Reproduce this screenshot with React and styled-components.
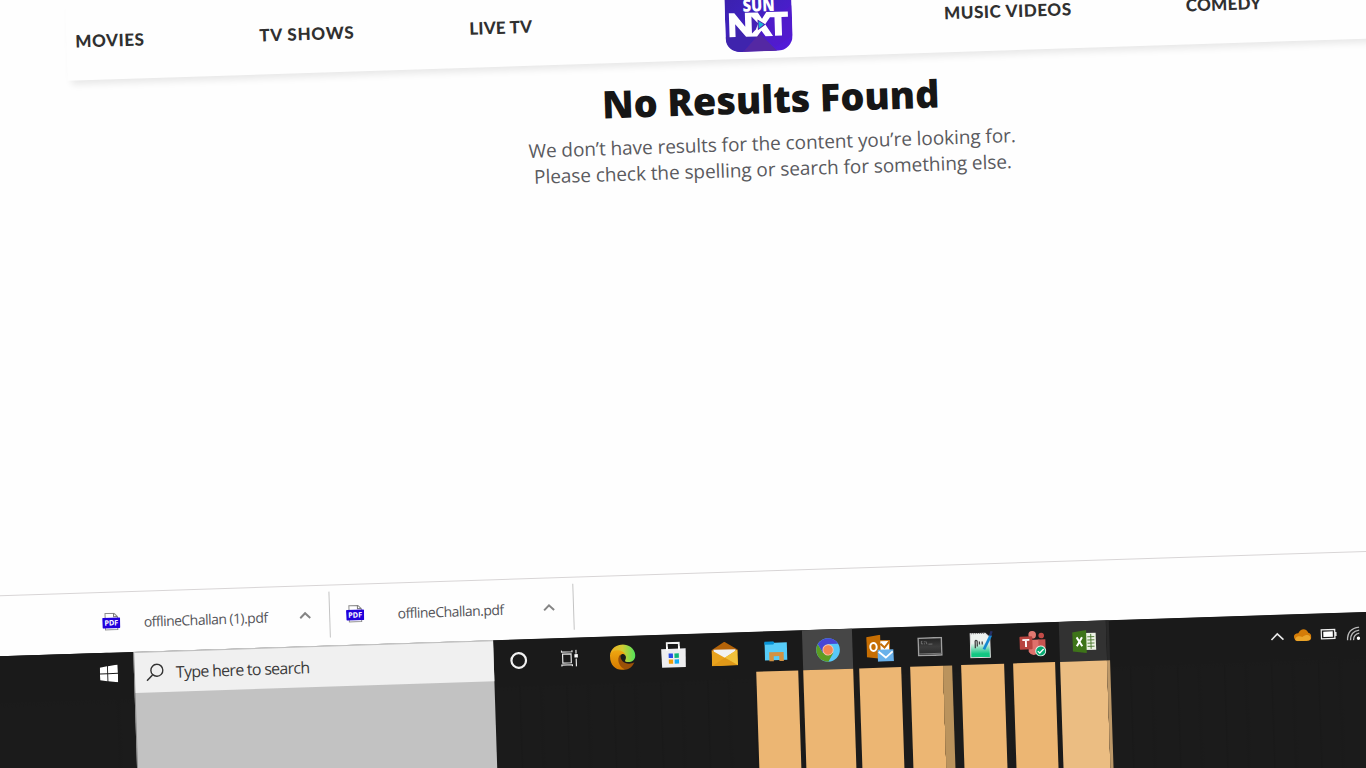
import React from "react";
import styled, { createGlobalStyle } from "styled-components";

const GlobalStyle = createGlobalStyle`
  * { box-sizing: border-box; }
  body { margin: 0; background: #fefefe; }
`;

const Viewport = styled.main`
  width: 1366px;
  height: 768px;
  overflow: hidden;
  background: #fefefe;
`;

const Desktop = styled.div`
  display: flex;
  flex-direction: column;
  width: 1430px;
  height: 830px;
  margin-left: -30px;
  transform-origin: 30px 0;
  transform: rotate(-1.862deg);
  font-family: "Open Sans", "Noto Sans", sans-serif;
`;

/* Site header */
const Header = styled.header`
  display: flex;
  height: 82.5px;
  flex: none;
  padding-left: 95px;
`;

const Nav = styled.nav`
  display: flex;
  flex: 1;
  padding: 9px 0 0 9px;
  background: #fefefe;
  box-shadow: 0 8px 7px -4px rgba(0, 0, 0, 0.09);
`;

const NavSlot = styled.div`
  flex: none;
  width: ${(p) => p.$width}px;
`;

const NavLink = styled.a`
  display: block;
  padding-top: 23px;
  font: 900 17px/24px Lato, "Open Sans", sans-serif;
  letter-spacing: ${(p) => p.$spacing || 0}px;
  color: #303030;
  white-space: nowrap;
`;

/* Empty result message */
const Results = styled.section`
  display: flex;
  flex-direction: column;
  align-items: center;
  flex: none;
  height: 512.5px;
  width: 1430px;
  padding: 12.2px 0 0 164px;
`;

const Title = styled.h1`
  margin: 0;
  font-size: 38px;
  line-height: 56px;
  font-weight: 800;
  letter-spacing: -0.12px;
  color: #161616;
  white-space: nowrap;
`;

const Message = styled.p`
  margin: 4.8px 0 0;
  font-size: 19px;
  line-height: 26px;
  letter-spacing: -0.07px;
  color: #5a5a5e;
  text-align: center;
  white-space: nowrap;
`;

/* Browser download shelf */
const Shelf = styled.div`
  display: flex;
  flex: none;
  height: 60.5px;
  padding: 6px 0 0 112px;
  border-top: 1px solid #d8d5d6;
  background: #fefefe;
`;

const Download = styled.div`
  display: flex;
  align-items: center;
  width: ${(p) => p.$width}px;
  height: 46px;
  padding-left: ${(p) => p.$inset || 0}px;
  border-right: 1px solid #c4c4c4;
`;

const FileName = styled.span`
  width: ${(p) => p.$width}px;
  margin-left: ${(p) => p.$gap}px;
  font-size: 14px;
  letter-spacing: -0.53px;
  color: #55555a;
  white-space: nowrap;
`;

/* Taskbar */
const Taskbar = styled.footer`
  display: flex;
  flex: 1;
  background:
    linear-gradient(#1a1a1a 0 44px, transparent 52px),
    linear-gradient(90deg, #1b1b1b 0 115px, transparent 118px),
    repeating-linear-gradient(90deg, #1b1b1b 0 9px, #191919 10px, #1b1b1b 12px 29px, #1a1a1a 31px, #1b1b1b 35px 47px);
`;

const Start = styled.div`
  display: flex;
  justify-content: center;
  width: 142px;
  padding: 12px 0 0 91px;
`;

const Search = styled.div`
  width: 360px;
  background: #c2c2c2;
  border-left: 1px solid #8a8a8a;
`;

const SearchField = styled.div`
  display: flex;
  align-items: center;
  gap: 12px;
  height: 41px;
  padding-left: 11px;
  border-top: 1px solid #bdbdbd;
  background: #f0f0f0;
  font-size: 16px;
  letter-spacing: -0.72px;
  color: #3b3b3b;
  white-space: nowrap;
`;

const AppSlot = styled.div`
  flex: none;
  width: 51.4px;
`;

const AppIcon = styled.div`
  display: flex;
  align-items: center;
  justify-content: center;
  width: ${(p) => (p.$active ? "50.2px" : "auto")};
  height: 40.3px;
  margin-left: ${(p) => (p.$active ? 0.8 : 0)}px;
  padding-left: ${(p) => Math.max(0, p.$shift || 0)}px;
  padding-right: ${(p) => Math.max(0, -(p.$shift || 0))}px;
  padding-top: 1.8px;
  background: ${(p) => p.$active || "transparent"};
`;

const Strip = styled.div`
  width: ${(p) => (p.$wide ? 50.2 : 42.2)}px;
  height: 140px;
  margin-left: ${(p) => (p.$wide ? 0.8 : 4.8)}px;
  background: ${(p) => p.$fill || "#ecb673"};
`;

const Tray = styled.div`
  display: flex;
  align-items: center;
  gap: 9px;
  height: 43px;
  margin-left: 160px;
`;

const Svg = ({ w, h, children }) => (
  <svg width={w} height={h} viewBox={`0 0 ${w} ${h}`} fill="none">
    {children}
  </svg>
);

const LogoArt = styled.svg`
  display: block;
  text { font-family: "Open Sans", sans-serif; font-weight: 800; fill: #fff; }
`;

const Logo = () => (
  <LogoArt width="67" height="67" viewBox="0 0 67 67">
    <defs>
      <linearGradient id="logoBg" x1="0" y1="0" x2="1" y2="1">
        <stop offset="0" stopColor="#3b20a8" />
        <stop offset=".3" stopColor="#3d22b8" />
        <stop offset="1" stopColor="#5519dc" />
      </linearGradient>
    </defs>
    <rect width="67" height="67" rx="15" fill="url(#logoBg)" />
    <path d="M17 67 34 49 51 67Z" fill="#5428a3" />
    <path d="M0 52 15 39 34 49 17 67Q0 67 0 52Z" fill="#3f24ad" />
    <path d="M34 49 48 33 67 22V52L50 63Z" fill="#541ac9" opacity=".6" />
    <text x="18" y="27" fontSize="17.5" textLength="32" lengthAdjust="spacingAndGlyphs">SUN</text>
    <path d="M4 52V28H9.5L20 42V28H33L37 34.5 41.5 28H63V33.3H56.5V52H49.5V33.3H45L40 40 47.5 52H40L36 46.5 31.5 52H20.5L10 39V52Z" fill="#fff" />
    <path d="M26.5 32 33 39 30.5 45 26.5 49Z" fill="#4521b6" />
    <path d="M33 36 39.5 40.3 33 45Z" fill="#16b9d4" stroke="#4a20b4" strokeWidth="1" />
  </LogoArt>
);

const PdfIcon = () => (
  <Svg w={18} h={18}>
    <path d="M3 .7H12L15.3 4V17H3Z" fill="#fff" stroke="#8c8c8c" />
    <path d="M11.5.7V4H15" stroke="#777" />
    <rect x="0" y="5" width="18" height="10.5" rx=".8" fill="#2100dc" />
    <text x="2" y="12.8" fill="#fff" fontFamily="Open Sans, sans-serif" fontSize="7.5" fontWeight="700" textLength="14" lengthAdjust="spacingAndGlyphs">PDF</text>
  </Svg>
);

const ShelfChevron = () => (
  <Svg w={12} h={8}><path d="M1 6.7 6 1.8 11 6.7" stroke="#858585" strokeWidth="2" /></Svg>
);

const icons = {
  windows: (
    <Svg w={18} h={18}>
      <path d="M0 2.6 7.3 1.5V8.3H0ZM8.2 1.4 18 0V8.3H8.2ZM0 9.3H7.3V16.3L0 15.2ZM8.2 9.3H18V17.8L8.2 16.4Z" fill="#fff" />
    </Svg>
  ),
  search: (
    <Svg w={18} h={18}>
      <circle cx="11" cy="7" r="6" stroke="#333" strokeWidth="1.4" />
      <path d="M6.5 11.5.8 17.2" stroke="#333" strokeWidth="1.5" />
    </Svg>
  ),
  cortana: <Svg w={18} h={18}><circle cx="9" cy="9" r="7.3" stroke="#f1f1f1" strokeWidth="2.2" /></Svg>,
  taskview: (
    <Svg w={18} h={17}>
      <path d="M2 4H10.5V13H2ZM1 .5V2H11.5V.5M1 16.5V15H11.5V16.5M15.5 0V4M15.5 9V17" stroke="#e5e5e5" strokeWidth="1.2" />
      <rect x="13.8" y="4.5" width="3.4" height="3.4" fill="#fff" />
    </Svg>
  ),
  edge: (
    <Svg w={26} h={26}>
      <defs>
        <linearGradient id="edgeTop"><stop stopColor="#f2ad20" /><stop offset=".5" stopColor="#d1cb33" /><stop offset="1" stopColor="#50e45b" /></linearGradient>
        <linearGradient id="edgeSide" x2="0" y2="1"><stop stopColor="#efa710" /><stop offset="1" stopColor="#d47800" /></linearGradient>
      </defs>
      <path d="M.5 10C3-3 24-3 25.7 11 26 17 20 19.5 15.5 17.5 14.5 16.5 17 15 16 12 14 7 6 6 .5 10Z" fill="url(#edgeTop)" />
      <path d="M.5 10C3 4 14 5 16 11 12 8 9 12 9.5 16 10.5 22 17 23 20 23.5 10 29-1 24 .5 10Z" fill="url(#edgeSide)" />
      <path d="M11 10C6 14 9 24 16 25.5 20 25 23 22 24.5 18.5 18 22 9.5 18 11 10Z" fill="#9a5008" />
    </Svg>
  ),
  store: (
    <Svg w={26} h={27}>
      <path d="M6.5 9V1.5H18.5V9" stroke="#f3f3f3" strokeWidth="1.8" />
      <path d="M.7 7.3H25.2L24.8 26H1.1Z" fill="#eeeef0" />
      <path d="M6.5 9V5M18.5 9V5" stroke="#fff" strokeWidth="1.8" />
      <path d="M8 12H12.3V16.5H8Z" fill="#284de9" /><path d="M13.8 12H18.2V16.5H13.8Z" fill="#10b77c" />
      <path d="M8 18H12.3V22.2H8Z" fill="#f09d08" /><path d="M13.8 18H18.2V22.2H13.8Z" fill="#10adf6" />
    </Svg>
  ),
  mail: (
    <Svg w={26} h={24}>
      <path d="M0 8 13 0 26 8V12H0Z" fill="#b46308" />
      <path d="M2 7.7H24V17H2Z" fill="#f2f2f3" />
      <path d="M0 8 13 16 26 8V24H0Z" fill="#e9a21c" />
      <path d="M13 16 26 8V24Z" fill="#f1c13b" /><path d="M0 24 13 16 26 24Z" fill="#df9818" />
    </Svg>
  ),
  explorer: (
    <Svg w={23} h={21}>
      <path d="M0 1H9L10 1.5H22.5V19H0Z" fill="#56ccf8" />
      <path d="M0 0H9L10 1.5 9 3.3H0Z" fill="#0693d7" />
      <path d="M4.5 20V11H19V20H14.5V15H9V20Z" fill="#d29243" />
    </Svg>
  ),
  chrome: (
    <Svg w={25} h={25}>
      <circle cx="12.5" cy="12.5" r="11.8" fill="#58c8fa" />
      <path d="M2.3 6.6A11.8 11.8 0 0 1 22.7 6.6H12.5L7.3 15.5Z" fill="#4747d5" />
      <path d="M2.3 6.6A11.8 11.8 0 0 0 12.5 24.3L17.7 15.5H7.3Z" fill="#5c9c22" />
      <circle cx="12.5" cy="12.5" r="5.6" fill="#f6c4ac" /><circle cx="12.5" cy="12.5" r="4.7" fill="#f48651" />
    </Svg>
  ),
  outlook: (
    <Svg w={27} h={27}>
      <rect x="13" y="6" width="10" height="12" fill="#fff" stroke="#cc7611" />
      <path d="M14 9 18 13 23 7" stroke="#c56d07" strokeWidth="2" />
      <path d="M0 2 14 0V24L0 22Z" fill="#c76e02" />
      <ellipse cx="7" cy="12" rx="3.2" ry="4" stroke="#fff" strokeWidth="2" />
      <rect x="11" y="15" width="16" height="12" fill="#69b1ea" /><path d="M12 17 19 23 26 17" stroke="#fff" strokeWidth="1.8" />
    </Svg>
  ),
  cmd: (
    <Svg w={25} h={19}>
      <defs><linearGradient id="screen" x2="0" y2="1"><stop stopColor="#222" /><stop offset=".5" stopColor="#3c3c3c" /><stop offset="1" stopColor="#292929" /></linearGradient></defs>
      <rect x=".8" y=".8" width="23.4" height="17.4" fill="url(#screen)" stroke="#a0a0a0" strokeWidth="1.5" />
      <path d="M5 4H4V6.5H5.5M7 4V5M7 6V7M8.5 4 9.5 7M11 7H15" stroke="#888" strokeWidth=".7" />
      <path d="M1 16.5H24" stroke="#777" />
    </Svg>
  ),
  notes: (
    <Svg w={24} h={27}>
      <defs><linearGradient id="paper" x2="0" y2="1"><stop offset=".4" stopColor="#eef2ef" /><stop offset=".85" stopColor="#12c782" /></linearGradient></defs>
      <path d="M1 2H16L20.5 6V26H1Z" fill="url(#paper)" stroke="#ddd" />
      <path d="M2 2H16" stroke="#777" strokeDasharray="1 1" />
      <path d="M5.8 16.5V9.5Q6.5 8 7.8 9.5V15M10 10V13M12.8 10V13" stroke="#444" strokeWidth="1.3" />
      <path d="M21.7 4 14.3 18" stroke="#1689d1" strokeWidth="2.7" /><path d="M22.5 0 21 4.5" stroke="#263065" strokeWidth="2.3" />
    </Svg>
  ),
  teams: (
    <Svg w={27} h={26}>
      <circle cx="13" cy="4" r="3.8" fill="#e27971" /><circle cx="22" cy="5" r="2.8" fill="#c34b47" />
      <path d="M9 9H20V20Q14 28 9 21Z" fill="#df706b" /><path d="M19 9H26V18Q23 22 19 19Z" fill="#c65450" />
      <rect x="0" y="5.5" width="13" height="13" rx="1" fill="#b8443f" />
      <path d="M3 9H10M6.5 9V16" stroke="#fff" strokeWidth="1.9" />
      <circle cx="21" cy="20.5" r="5" fill="#05aa71" stroke="#dfede5" /><path d="M18 20.5 20 22.5 24 18.5" stroke="#fff" strokeWidth="1.3" />
    </Svg>
  ),
  excel: (
    <Svg w={25} h={23}>
      <path d="M12 3H23.5V20H12Z" fill="#edf2e5" />
      <path d="M18.5 4V19M15 6.8H22M15 10H22M15 13.2H22M15 16.4H22" stroke="#47762a" strokeWidth=".9" />
      <path d="M0 2 14 0V23L0 21Z" fill="#3e7419" /><path d="M4.3 7 9.7 16M9.7 7 4.3 16" stroke="#fff" strokeWidth="2" />
    </Svg>
  ),
};

const orange = "#ecb673";
const apps = [
  { id: "cortana", shift: -2 }, { id: "taskview", shift: -3 }, { id: "edge", shift: 1.5 }, { id: "store", shift: 0 }, { id: "mail", shift: 0 },
  { id: "explorer", strip: orange, shift: 0 },
  { id: "chrome", strip: orange, active: "#464646", wide: true, shift: 0 },
  { id: "outlook", strip: orange, shift: 3 },
  { id: "cmd", strip: `linear-gradient(90deg, ${orange} 32.4px, #9a7749 32.5px, #ba935d 33.5px)` },
  { id: "notes", strip: orange, shift: 0 }, { id: "teams", strip: orange },
  { id: "excel", strip: "linear-gradient(90deg, #ebbd82 46.4px, #8f7350 46.6px, #bd9868 47.6px)", active: "linear-gradient(90deg, #323232 46.5px, #222 47px, #292929 48px)", wide: true },
];

export default function App() {
  return (
    <Viewport>
      <GlobalStyle />
      <Desktop>
        <Header>
          <Nav>
            <NavSlot $width={184}><NavLink $spacing={0.55}>MOVIES</NavLink></NavSlot>
            <NavSlot $width={210}><NavLink $spacing={0.8}>TV SHOWS</NavLink></NavSlot>
            <NavSlot $width={256}><NavLink $spacing={0.25}>LIVE TV</NavLink></NavSlot>
            <NavSlot $width={219}><Logo /></NavSlot>
            <NavSlot $width={242}><NavLink $spacing={0.6}>MUSIC VIDEOS</NavLink></NavSlot>
            <NavSlot $width={100}><NavLink $spacing={0.3}>COMEDY</NavLink></NavSlot>
          </Nav>
        </Header>
        <Results>
          <Title>No Results Found</Title>
          <Message>We don’t have results for the content you’re looking for.<br />Please check the spelling or search for something else.</Message>
        </Results>
        <Shelf>
          <Download $width={228}><PdfIcon /><FileName $gap={23.5} $width={155}>offlineChallan (1).pdf</FileName><ShelfChevron /></Download>
          <Download $width={244} $inset={16}><PdfIcon /><FileName $gap={33.5} $width={145}>offlineChallan.pdf</FileName><ShelfChevron /></Download>
        </Shelf>
        <Taskbar>
          <Start>{icons.windows}</Start>
          <Search><SearchField>{icons.search}Type here to search</SearchField></Search>
          {apps.map((a) => (
            <AppSlot key={a.id}>
              <AppIcon $active={a.active} $shift={a.shift}>{icons[a.id]}</AppIcon>
              {a.strip && <Strip $fill={a.strip} $wide={a.wide} />}
            </AppSlot>
          ))}
          <Tray>
            <Svg w={14} h={9}><path d="M1 8 7 2 13 8" stroke="#e8e8e8" strokeWidth="1.6" /></Svg>
            <Svg w={18} h={12}>
              <path d="M2 11C-1 7 1 4 5 4 8-2 14 0 15 4 19 5 19 11 15 12H4Z" fill="#d47c08" />
              <path d="M2 11C1 8 5 6 9 8 14 4 18 7 17 10 16 12 14 12 13 12H4Z" fill="#eba52a" />
            </Svg>
            <Svg w={17} h={12}><rect x="1" y="1.5" width="13.5" height="9" stroke="#eee" strokeWidth="1.3" /><rect x="3" y="3.3" width="9.5" height="5.4" fill="#fff" /><path d="M15.5 4V8" stroke="#eee" strokeWidth="1.5" /></Svg>
            <Svg w={14} h={14}>
              <path d="M1 14Q1 2 13 1M4 14Q4 5 13 4M7 14Q7 8 13 7" stroke="#b9b9b9" strokeWidth="1.4" />
              <circle cx="12" cy="12" r="1.7" fill="#fff" />
            </Svg>
          </Tray>
        </Taskbar>
      </Desktop>
    </Viewport>
  );
}
